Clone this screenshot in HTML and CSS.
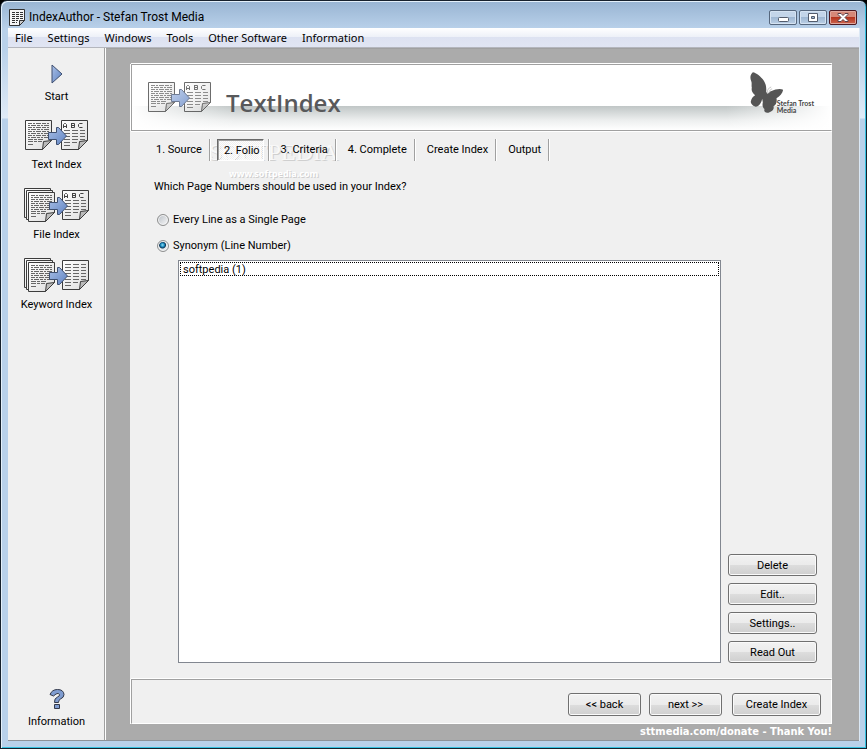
FILE: index.html
```html
<!DOCTYPE html>
<html lang="en">
<head>
<meta charset="utf-8">
<title>IndexAuthor - Stefan Trost Media</title>
<link rel="stylesheet" href="styles.css">
</head>
<body>
<svg class="defs" aria-hidden="true">
  <defs>
    <linearGradient id="blue" x1="0" y1="0" x2="1" y2="1"><stop offset="0" stop-color="#a9bfe6"/><stop offset="1" stop-color="#5f83c2"/></linearGradient>
    <linearGradient id="paper" x1="0" y1="0" x2="1" y2="1"><stop offset="0" stop-color="#fff"/><stop offset="1" stop-color="#dcdcdc"/></linearGradient>
    <g id="sheet">
      <path d="M.5.5h26v20l-9 9H.5z" fill="url(#paper)" stroke="#3c3c3c"/>
      <path d="M17.500 29.500l1-8 8-1z" fill="#bbb" stroke="#3c3c3c"/>
    </g>
    <g id="text" fill="none" stroke="#666">
      <path d="M3 3.500h21M3 7.500h21M3 11.500h21M3 15.500h21" stroke-dasharray="4 1 2 1 5 1"/>
      <path d="M3 5.500h21M3 9.500h21M3 13.500h21M3 17.500h20" stroke-dasharray="2 1 5 1 3 1"/>
      <path d="M3 19.500h15M3 21.500h14M3 24.500h6" stroke-dasharray="5 1 3 1"/>
    </g>
    <g id="columns" fill="none" stroke="#666">
      <path d="M3 10.500h21M3 13.500h21M3 16.500h21M3 19.500h21" stroke-dasharray="6 2"/>
      <path d="M3 22.500h13M3 25.500h6" stroke-dasharray="6 2"/>
    </g>
    <g id="abc" fill="none" stroke="#444">
      <path d="M2.500 8V4.500l1-1h1l1 1V8M2.500 6.500h3M10.500 3v5M10.500 3.500h3v4h-3M10.500 5.500h3M21.500 3.500h-3l-1 1v2l1 1h3"/>
    </g>
    <path id="arrow" d="M.5 6.500h8v-5h2l8 8.500-8 8.500h-2v-5h-8z" fill="url(#blue)" stroke="#3e4f70"/>
    <g id="stack">
      <use href="#sheet"/><use href="#sheet" x="2" y="2"/><use href="#sheet" x="4" y="4"/><use href="#text" x="4" y="4"/>
    </g>
    <symbol id="text-index" viewBox="0 0 64 30">
      <use href="#sheet"/><use href="#text"/>
      <use href="#sheet" x="36"/><use href="#columns" x="36"/><use href="#abc" x="36"/>
      <use href="#arrow" x="23" y="6"/>
    </symbol>
    <symbol id="file-index" viewBox="0 0 66 34">
      <use href="#stack"/>
      <use href="#sheet" x="38" y="2"/><use href="#columns" x="38" y="2"/><use href="#abc" x="38" y="2"/>
      <use href="#arrow" x="25" y="8"/>
    </symbol>
    <symbol id="keyword-index" viewBox="0 0 66 34">
      <use href="#stack"/>
      <use href="#sheet" x="38" y="2"/><use href="#columns" x="38" y="2"/>
      <path d="M41 6.500h21M41 9.500h21" stroke="#666" stroke-dasharray="6 2"/>
      <use href="#arrow" x="25" y="8"/>
    </symbol>
  </defs>
</svg>

<div class="window">
  <header class="titlebar">
    <svg class="app-icon" width="16" height="17" viewBox="0 0 16 17"><path d="M.5.5h15v11l-5 5H.5z" fill="#f6f6f6" stroke="#333"/><path d="M10.500 16.500v-5h5z" fill="#ccc" stroke="#333"/><path d="M3 3.500h11M3 5.500h11M3 7.500h11M3 9.500h11M3 11.500h6M3 13.500h5" stroke="#333" stroke-dasharray="3 1"/></svg>
    <h1>IndexAuthor - Stefan Trost Media</h1>
    <div class="window-buttons">
      <button type="button" aria-label="Minimize"><svg width="12" height="11" viewBox="0 0 12 11"><rect x="1.500" y="5.500" width="10" height="4" rx="1" fill="#fff" stroke="#535c6c"/></svg></button>
      <button type="button" aria-label="Maximize"><svg width="12" height="11" viewBox="0 0 12 11"><path fill-rule="evenodd" d="M1.500 1.500h9v8h-9zM4.500 4.500h3v2h-3z" fill="#fff" stroke="#535c6c"/></svg></button>
      <button type="button" class="close" aria-label="Close"><svg width="12" height="11" viewBox="0 0 12 11"><path d="M1 1.500h3l2 2 2-2h3v1l-3 3 3 3v1H8l-2-2-2 2H1v-1l3-3-3-3z" fill="#fff" stroke="#59404a"/></svg></button>
    </div>
  </header>

  <div class="client">
    <nav class="menubar">
      <button type="button">File</button><button type="button">Settings</button><button type="button">Windows</button><button type="button">Tools</button><button type="button">Other Software</button><button type="button">Information</button>
    </nav>

    <div class="workspace">
      <nav class="sidebar">
        <button type="button" class="tool tool-small">
          <span class="tool-icon"><svg width="12" height="20" viewBox="0 0 12 20"><path d="M1 1l10 9-10 9z" fill="url(#blue)" stroke="#3e4f70"/></svg></span>
          <span>Start</span>
        </button>
        <div class="tool-group">
          <button type="button" class="tool"><span class="tool-icon"><svg width="64" height="30"><use href="#text-index"/></svg></span><span>Text Index</span></button>
          <button type="button" class="tool"><span class="tool-icon"><svg width="66" height="34"><use href="#file-index"/></svg></span><span>File Index</span></button>
          <button type="button" class="tool"><span class="tool-icon"><svg width="66" height="34"><use href="#keyword-index"/></svg></span><span>Keyword Index</span></button>
        </div>
        <button type="button" class="tool tool-small tool-last">
          <span class="tool-icon"><svg width="16" height="20" viewBox="0 0 16 20"><path d="M1 5.500Q3 .5 8.500.5q6 0 6.500 5 0 3-3.500 4.500Q9.500 11 9.500 13.500h-4q-.5-4 3-5.500Q11 7 10.500 5.500 9.500 3.500 7 5L4.500 7zM5.500 15.500h5v4h-5z" fill="#7f9cd0" stroke="#33394a"/></svg></span>
          <span>Information</span>
        </button>
      </nav>

      <div class="desk">
        <main class="panel">
          <div class="banner">
            <svg class="banner-icon" width="64" height="30"><use href="#text-index"/></svg>
            <h2>TextIndex</h2>
            <div class="brand">
              <svg width="35" height="42" viewBox="0 0 100 126"><path d="M9 1C19 2 33 14 42 26 49 37 50 48 49 59L53 65C58 63 59 58 65 57 76 52 90 49 100 53 98 64 91 72 80 79 82 90 79 98 71 103 74 112 66 120 56 122 47 124 41 119 44 111 38 106 37 99 39 91L37 80C35 92 27 104 18 104 11 103 2 96 3 88 5 79 10 74 16 70 7 63 4 56 6 47 4 40 7 34 4 27 0 17 1 8 9 1Z" fill="#555"/><path d="M52 64C52 53 57 47 64 45M57 64C58 55 63 51 67 51" fill="none" stroke="#aaa" stroke-width="2"/></svg>
              <span>Stefan Trost<br>Media</span>
            </div>
          </div>

          <div class="tabs" role="tablist">
            <div class="watermark"><span class="mark">SOFTPEDIA</span><span class="site">www.softpedia.com</span></div>
            <button type="button" role="tab">1. Source</button>
            <button type="button" role="tab" class="active" aria-selected="true"><span>2. Folio</span></button>
            <button type="button" role="tab">3. Criteria</button>
            <button type="button" role="tab">4. Complete</button>
            <button type="button" role="tab">Create Index</button>
            <button type="button" role="tab">Output</button>
          </div>

          <form class="form">
            <p>Which Page Numbers should be used in your Index?</p>
            <label class="choice"><input type="radio" name="pages">Every Line as a Single Page</label>
            <label class="choice"><input type="radio" name="pages" checked>Synonym (Line Number)</label>
            <div class="list-row">
              <select size="20" aria-label="Synonyms"><option>softpedia (1)</option></select>
              <div class="list-actions">
                <button type="button" class="button wide">Delete</button>
                <button type="button" class="button wide">Edit..</button>
                <button type="button" class="button wide">Settings..</button>
                <button type="button" class="button wide">Read Out</button>
              </div>
            </div>
          </form>

          <footer class="wizard">
            <button type="button" class="button">&lt;&lt; back</button>
            <button type="button" class="button">next &gt;&gt;</button>
            <button type="button" class="button wide">Create Index</button>
          </footer>
        </main>
        <a class="donate" href="#">sttmedia.com/donate - Thank You!</a>
      </div>
    </div>
  </div>
</div>
</body>
</html>
```
FILE: styles.css
```css
* { box-sizing: border-box; }

body {
  margin: 0;
  background: #000;
  font: 11px/16px Roboto, "Liberation Sans", Arial, sans-serif;
  color: #000;
}

button {
  font: inherit;
  color: inherit;
  margin: 0;
  padding: 0;
  border: 0;
  background: none;
}

svg { display: block; flex: none; }
.defs { position: absolute; width: 0; height: 0; }

.window {
  min-height: 100vh;
  display: flex;
  flex-direction: column;
  padding: 0 6px 7px;
  border: 1px solid #16202c;
  border-radius: 7px 7px 0 0;
  box-shadow: inset 1px 1px #e4f0fa, inset -1px -1px #35c1e0;
  background: linear-gradient(#98b4d2 0, #b9d1ea 28px, #b9d1ea 48px, #e0ebf7 117px, #b9d1ea 118px);
}

.titlebar {
  display: flex;
  align-items: center;
  height: 27px;
  padding: 5px 3px 0 2px;
}
.titlebar h1 {
  flex: 1;
  margin: 0 0 0 4px;
  font: 12px/16px Roboto, sans-serif;
}
.window-buttons { display: flex; gap: 2px; }
.window-buttons button {
  display: flex;
  align-items: center;
  justify-content: center;
  width: 28px;
  height: 15px;
  border: 1px solid #56677d;
  border-radius: 2px;
  box-shadow: inset 0 0 0 1px #d5e3f2;
  background: linear-gradient(#c3d5e9 50%, #9fb8d3 50%, #bcd0e6);
}
.window-buttons .close {
  border-color: #4d1921;
  box-shadow: inset 0 0 0 1px #dfa79d;
  background: linear-gradient(#d68878 50%, #b5351f 50%, #cc6650);
}

.client {
  flex: 1;
  display: flex;
  flex-direction: column;
  border: 1px solid #dbe8f5;
  border-width: 0 1px 0 0;
  margin-left: 1px;
  background: #f0f0f0;
}

.menubar {
  display: flex;
  gap: 1px;
  height: 20px;
  border-bottom: 1px solid #b4b6bd;
  background: linear-gradient(#fff, #eef1f8 45%, #dde2f1 50%, #e1e5f3);
}
.menubar button {
  padding: 0 7px;
  font: 11px/20px "Noto Sans", sans-serif;
}

.workspace { flex: 1; display: flex; border-bottom: 1px solid #8e9298; }

.sidebar {
  flex: none;
  width: 98px;
  display: flex;
  flex-direction: column;
  padding: 15px 0 10px;
  border-right: 1px solid #fff;
  box-shadow: inset -1px 0 #a0a0a0;
}
.tool-group { display: flex; flex-direction: column; gap: 14px; margin-top: 12px; }
.tool { display: flex; flex-direction: column; align-items: center; gap: 4px; width: 100%; }
.tool-icon { display: flex; align-items: center; height: 36px; }
.tool-small .tool-icon { height: 22px; }
.tool-last { margin-top: auto; }

.desk {
  flex: 1;
  display: flex;
  flex-direction: column;
  padding: 15px 27px 0 24px;
  border-top: 1px solid #a0a0a0;
  background: #ababab;
}

.panel { flex: 1; display: flex; flex-direction: column; background: #f0f0f0; }

.banner {
  display: flex;
  height: 67px;
  margin-left: 1px;
  padding: 0 17px 0 16px;
  border: 1px solid #a0a0a0;
  border-right-color: #fff;
  box-shadow: 0 -1px #fff, -1px 0 #fff, 0 1px #fff;
  background:
    linear-gradient(90deg, #fff, transparent 15%, transparent 85%, #fff),
    linear-gradient(#fff 41px, #c0c6c6 41px, #eceeee 55px, #fff);
}
.banner-icon { margin-top: 17px; opacity: .75; }
.banner h2 {
  flex: 1;
  margin: 23px 0 0 14px;
  font: 600 24px/30px "Open Sans", sans-serif;
  color: #58595b;
}
.brand { display: flex; margin-top: 7px; color: #444; font: bold 7px/7px Lato, sans-serif; }
.brand span { margin: 28px 0 0 -7px; }

.tabs { position: relative; display: flex; height: 22px; margin: 8px 0 0 15px; }
.tabs button {
  position: relative;
  padding: 1px 8px 1px 11px;
  border-right: 1px solid #fff;
  box-shadow: inset -1px 0 #a0a0a0;
  line-height: 20px;
}
.tabs .active { padding: 0 5px 0 6px; }
.active span {
  display: block;
  height: 22px;
  padding: 1px 3px 0 6px;
  border: 1px solid #fff;
  border-top-color: #696969;
  border-left-color: #696969;
  box-shadow: inset 1px 1px #a0a0a0;
  background: repeating-conic-gradient(rgba(255, 255, 255, .8) 0 25%, transparent 0 50%) 0 0 / 2px 2px;
}
.watermark {
  position: absolute;
  left: 64px;
  top: -2px;
  display: flex;
  flex-direction: column;
  align-items: center;
  pointer-events: none;
  color: #f8f8f8;
  text-shadow: 1px 1px #cfcfcf;
}
.mark { font: 24px/30px "Liberation Serif", serif; }
.site { font: bold 9px/14px "Noto Sans", sans-serif; color: #fff; }

.form {
  flex: 1;
  display: flex;
  flex-direction: column;
  padding: 18px 15px 16px 24px;
}
.form p { margin: 0 0 17px; }
.choice { display: flex; align-items: center; gap: 4px; margin-bottom: 10px; }
.choice + .choice { margin-bottom: 6px; }
.choice input {
  appearance: none;
  width: 12px;
  height: 12px;
  margin: 0 0 0 3px;
  border: 1px solid #8e8f8f;
  border-radius: 50%;
  box-shadow: inset 0 0 0 1px #f4f4f4;
  background: linear-gradient(135deg, #b8bec5, #fafafa);
}
.choice input:checked {
  background: radial-gradient(circle at 45% 40%, #8fe0f8 0, #1684b8 2px, #0d3657 3px, #e3e8ec 4px);
}

.list-row { flex: 1; display: flex; gap: 7px; padding-left: 24px; }
.list-row select {
  flex: 1;
  min-width: 0;
  margin: 0;
  padding: 0;
  border: 1px solid #828790;
  border-radius: 0;
  outline: 0;
  overflow: hidden;
  font: inherit;
  color: #000;
  background: #fff;
}
.list-row option {
  min-height: 0;
  height: 14px;
  margin: 1px;
  padding: 0 2px;
  border: 1px dotted #000;
  line-height: 13px;
}
.list-actions { display: flex; flex-direction: column; justify-content: flex-end; gap: 7px; }

.button {
  width: 73px;
  height: 23px;
  border: 1px solid #707070;
  border-radius: 3px;
  box-shadow: inset 0 0 0 1px #fafafa;
  background: linear-gradient(#f2f2f2, #ebebeb 50%, #dddddd 50%, #cfcfcf);
  line-height: 21px;
}
.wide { width: 89px; }
.list-actions .button { height: 22px; }

.wizard {
  display: flex;
  justify-content: flex-end;
  gap: 8px;
  height: 45px;
  margin-left: 1px;
  padding: 13px 10px 0;
  border: 1px solid #fff;
  border-top-color: #a0a0a0;
  border-left-color: #a0a0a0;
  box-shadow: 0 -1px #fff, -1px 0 #fff;
}
.wizard .wide { margin-left: 2px; }

.donate {
  align-self: flex-end;
  font: bold 11px/16px "DejaVu Sans Condensed", sans-serif;
  color: #fff;
  text-decoration: none;
}
```
